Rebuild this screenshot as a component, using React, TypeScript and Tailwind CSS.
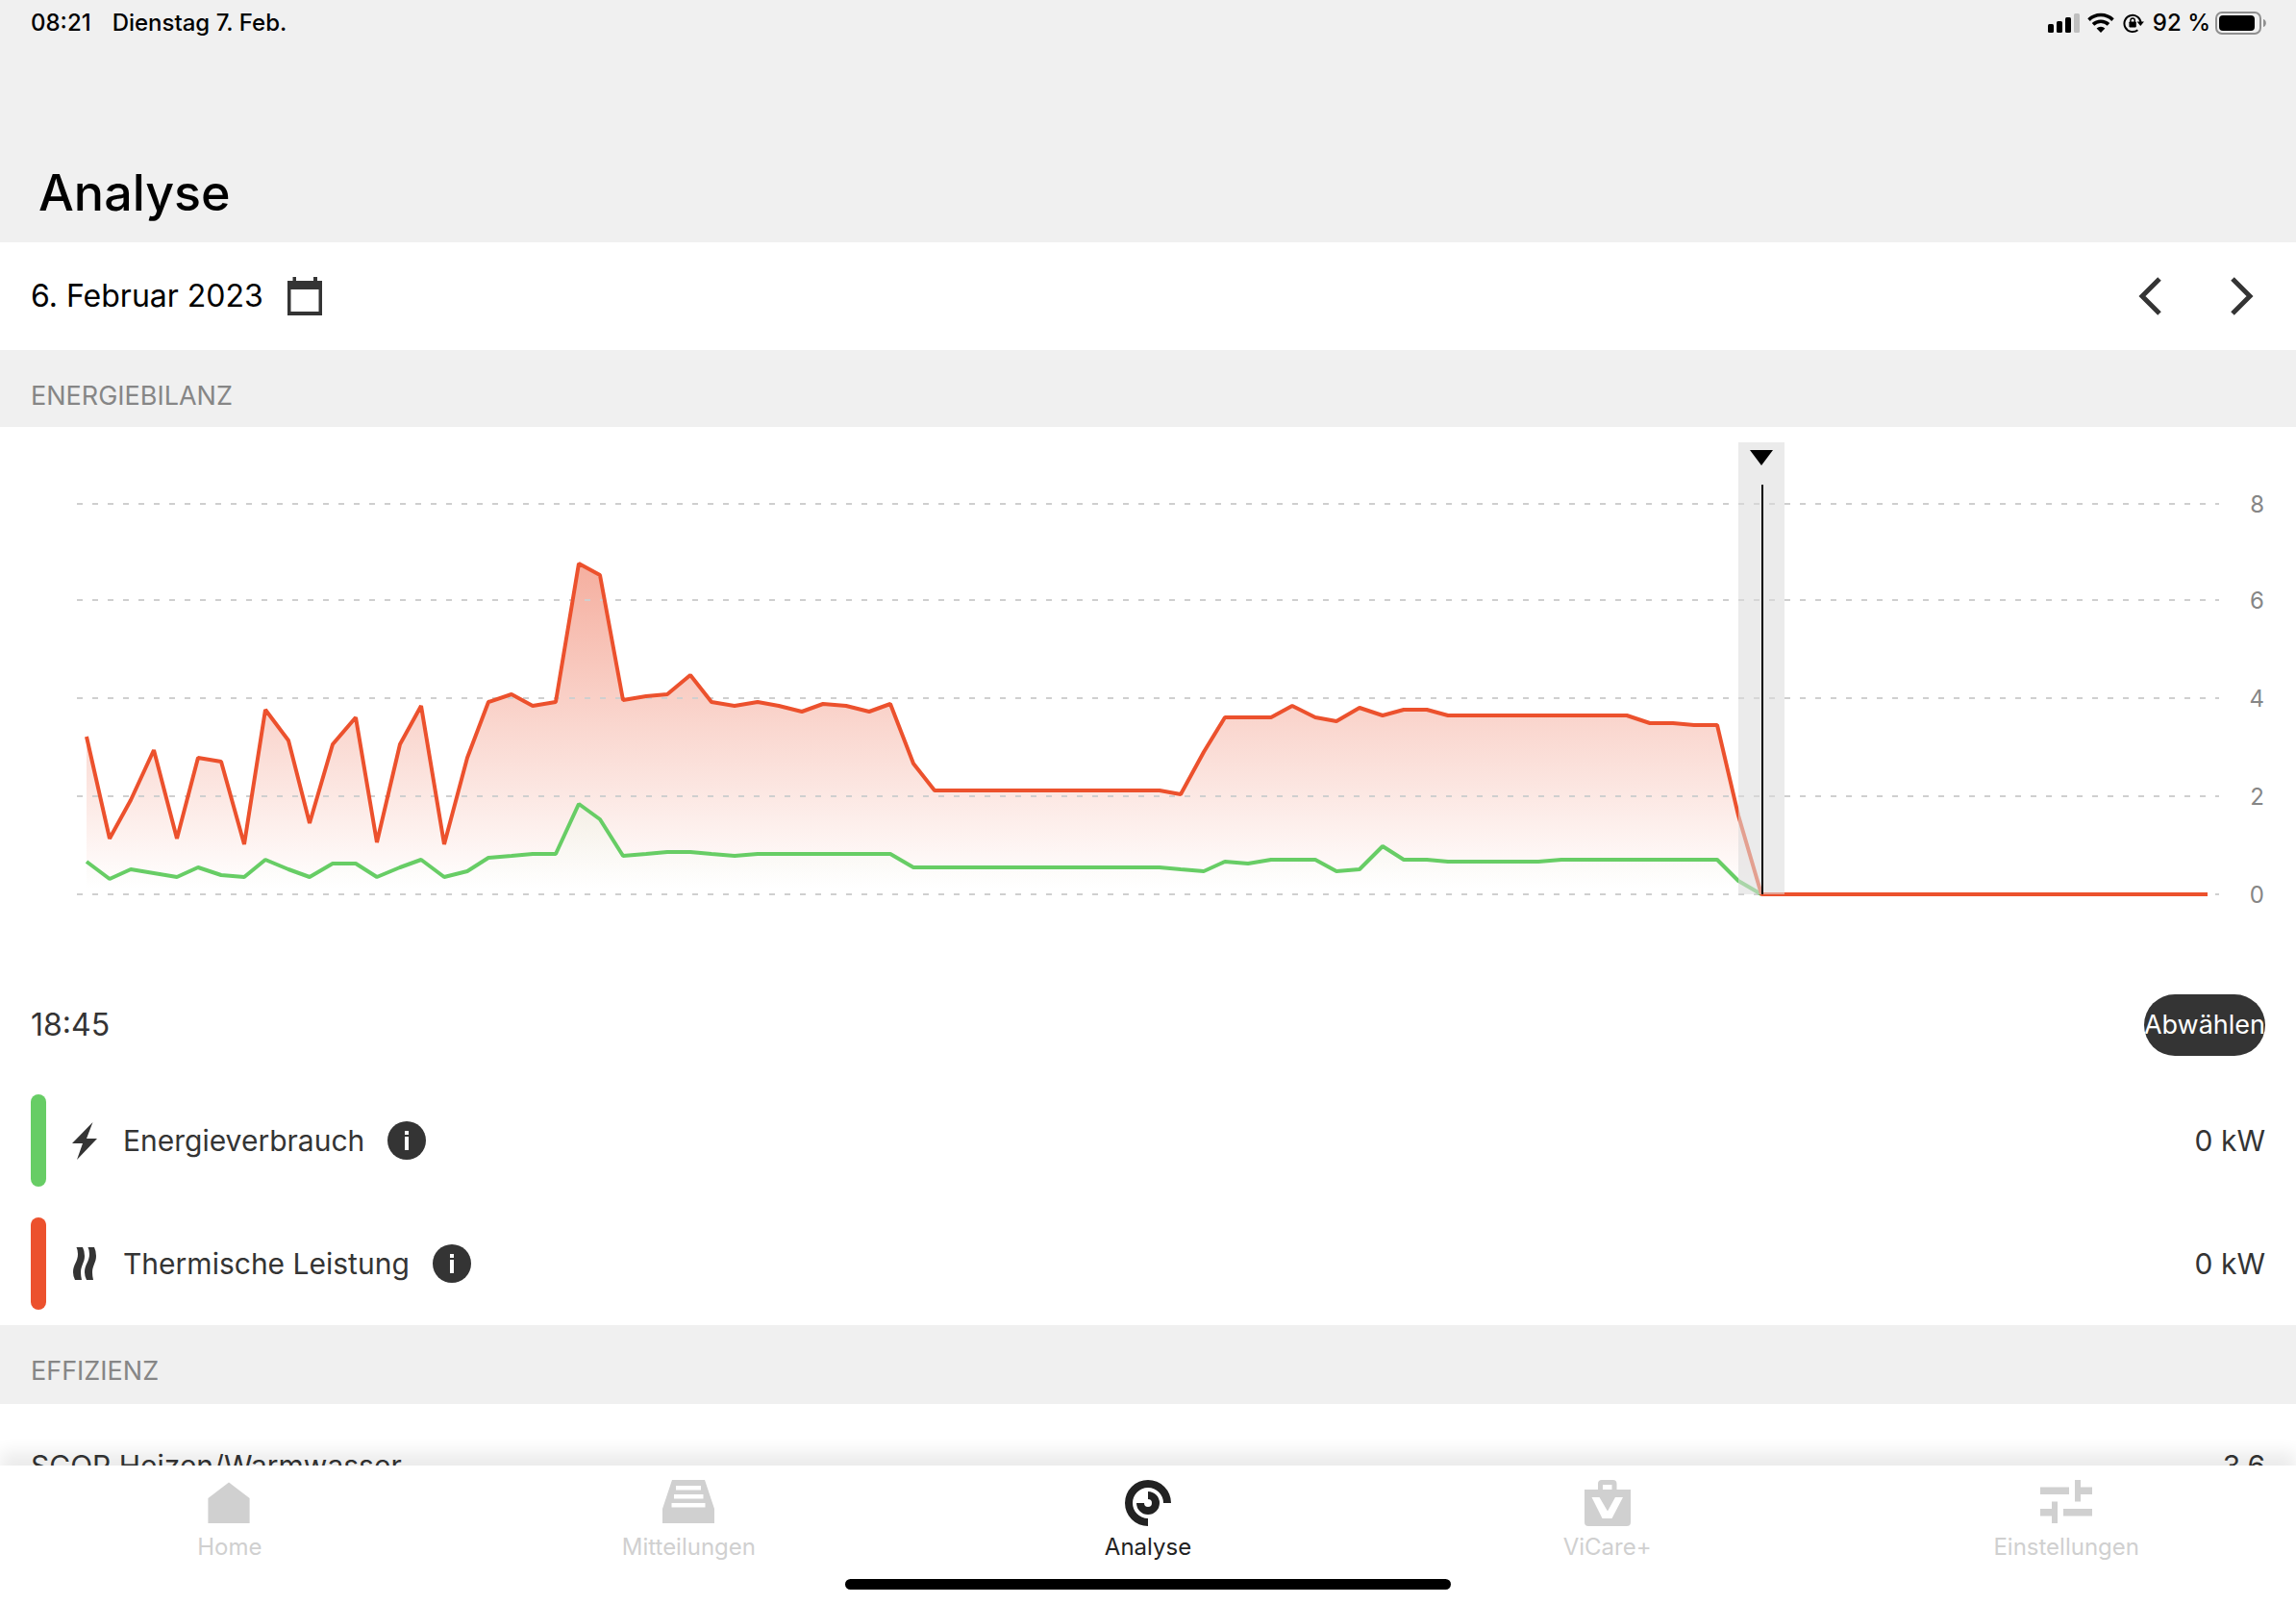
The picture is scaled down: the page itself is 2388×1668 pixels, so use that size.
import type { ReactNode } from "react";

// kW, one value per quarter of an hour, 00:00 to 23:45
const thermal = [
  3.23, 1.14, 1.93, 2.96, 1.14, 2.8, 2.72, 1.02, 3.78, 3.15, 1.46, 3.07, 3.63, 1.06, 3.07, 3.86,
  1.02, 2.8, 3.94, 4.1, 3.86, 3.94, 6.78, 6.54, 3.98, 4.06, 4.1, 4.49, 3.94, 3.86, 3.94, 3.86,
  3.74, 3.9, 3.86, 3.74, 3.9, 2.68, 2.13, 2.13, 2.13, 2.13, 2.13, 2.13, 2.13, 2.13, 2.13, 2.13,
  2.13, 2.05, 2.92, 3.63, 3.63, 3.63, 3.86, 3.63, 3.55, 3.82, 3.67, 3.78, 3.78, 3.67, 3.67, 3.67,
  3.67, 3.67, 3.67, 3.67, 3.67, 3.67, 3.51, 3.51, 3.47, 3.47, 1.62, 0, 0, 0, 0, 0,
  0, 0, 0, 0, 0, 0, 0, 0, 0, 0, 0, 0, 0, 0, 0, 0,
];

const consumption = [
  0.67, 0.32, 0.51, 0.43, 0.35, 0.55, 0.39, 0.35, 0.71, 0.51, 0.35, 0.63, 0.63, 0.35, 0.55, 0.71,
  0.35, 0.47, 0.75, 0.79, 0.83, 0.83, 1.85, 1.54, 0.79, 0.83, 0.87, 0.87, 0.83, 0.79, 0.83, 0.83,
  0.83, 0.83, 0.83, 0.83, 0.83, 0.55, 0.55, 0.55, 0.55, 0.55, 0.55, 0.55, 0.55, 0.55, 0.55, 0.55,
  0.55, 0.51, 0.47, 0.67, 0.63, 0.71, 0.71, 0.71, 0.47, 0.51, 0.99, 0.71, 0.71, 0.67, 0.67, 0.67,
  0.67, 0.67, 0.71, 0.71, 0.71, 0.71, 0.71, 0.71, 0.71, 0.71, 0.28, 0,
];

const CHART_LEFT = 90;
const CHART_RIGHT = 2296;
const BASELINE = 486;
const UNIT = 50.75;

// both axes snap to even units so that flat stretches stay crisp
const snap = (n: number) => Math.round(n / 2) * 2;
const xAt = (i: number) => snap(CHART_LEFT + 0.5 + (i * (CHART_RIGHT - CHART_LEFT)) / 95);
const yAt = (v: number) => snap(BASELINE - v * UNIT);

const linePath = (values: number[]) =>
  values.map((v, i) => `${i === 0 ? "M" : "L"}${xAt(i)} ${yAt(v)}`).join("");

const areaPath = (values: number[]) =>
  `${linePath(values)}L${xAt(values.length - 1)} ${BASELINE}L${CHART_LEFT} ${BASELINE}Z`;

const gridLines = [
  { label: "8", y: 80 },
  { label: "6", y: 180 },
  { label: "4", y: 282 },
  { label: "2", y: 384 },
  { label: "0", y: 486 },
];

function EnergyChart() {
  return (
    <svg viewBox="0 0 2388 590" className="block w-full" role="img" aria-label="Energiebilanz">
      <defs>
        <linearGradient id="thermal" gradientUnits="userSpaceOnUse" x1="0" y1="142" x2="0" y2="480">
          <stop offset="0" stopColor="#e9502e" stopOpacity="0.46" />
          <stop offset="1" stopColor="#e9502e" stopOpacity="0" />
        </linearGradient>
        <linearGradient id="consumption" gradientUnits="userSpaceOnUse" x1="0" y1="392" x2="0" y2="480">
          <stop offset="0" stopColor="#eff1e4" stopOpacity="0.6" />
          <stop offset="1" stopColor="#ffffff" stopOpacity="0.6" />
        </linearGradient>
      </defs>
      <path d={areaPath(thermal)} fill="url(#thermal)" />
      <path d={areaPath(consumption)} fill="url(#consumption)" />
      {gridLines.map(({ label, y }) => (
        <g key={label}>
          <line x1="80" x2="2308" y1={y} y2={y} stroke="#cfcfcf" strokeWidth="2" strokeDasharray="6 10" />
          <text x="2355" y={y + 9} textAnchor="end" className="fill-[#868686] text-[24px]">
            {label}
          </text>
        </g>
      ))}
      <path d={linePath(consumption)} fill="none" stroke="#67cd65" strokeWidth="4" strokeLinejoin="bevel" />
      <path d={linePath(thermal)} fill="none" stroke="#ec512d" strokeWidth="4" strokeLinejoin="bevel" />
      <rect x="1808" y="16" width="48" height="470" fill="#dcdcdc" fillOpacity="0.57" />
      <path d="M1820 24h24l-12 16z" fill="#000" />
      <rect x="1832" y="60" width="2" height="426" fill="#000" />
    </svg>
  );
}

function StatusBar() {
  return (
    <div className="flex h-12 items-center justify-between pr-[30px] pl-8 text-2xl font-medium text-black">
      <div className="flex gap-[22px]">
        <span>08:21</span>
        <span>Dienstag 7. Feb.</span>
      </div>
      <div className="flex items-center">
        <svg width="34" height="22" viewBox="0 0 34 22" aria-hidden="true">
          <rect x="0" y="12" width="6" height="9" rx="1.5" />
          <rect x="9" y="9" width="6" height="12" rx="1.5" />
          <rect x="18" y="5" width="6" height="16" rx="1.5" />
          <rect x="27" y="1" width="6" height="20" rx="1.5" fill="#bfbfbf" />
        </svg>
        <svg width="28" height="22" viewBox="0 0 28 22" className="ml-[7px]" aria-hidden="true">
          <g fill="none" stroke="#000" strokeWidth="3.6">
            <path d="M1.5 7.6a18 18 0 0 1 25 0" />
            <path d="M6 12.4a11.6 11.6 0 0 1 16 0" />
          </g>
          <path d="M9.6 16.4a6.4 6.4 0 0 1 8.8 0L14 21z" />
        </svg>
        <svg width="22" height="22" viewBox="0 0 22 22" className="ml-[9px]" aria-hidden="true">
          <path d="M15.4 18.2A8.6 8.6 0 1 1 18.6 10.5" fill="none" stroke="#000" strokeWidth="2" />
          <path d="M14.6 9.6h7.4l-3.7 4.4z" />
          <rect x="6.4" y="9.4" width="7.4" height="6" rx="0.8" />
          <path d="M7.9 10V8.2a2.2 2.2 0 0 1 4.4 0V10" fill="none" stroke="#000" strokeWidth="1.4" />
        </svg>
        <span className="ml-[9px]">92 %</span>
        <svg width="54" height="24" viewBox="0 0 54 24" className="ml-[5px]" aria-hidden="true">
          <rect x="1" y="1" width="46" height="22" rx="6" fill="none" stroke="#8f8f8f" strokeWidth="2" />
          <rect x="4" y="4" width="37" height="16" rx="4" />
          <path d="M50 8c3.800 1 3.800 7 0 8z" fill="#8f8f8f" />
        </svg>
      </div>
    </div>
  );
}

function SectionHeader({ children, className = "pb-4" }: { children: ReactNode; className?: string }) {
  return (
    <h2 className={`bg-[#f0f0f0] px-8 pt-8 text-[27px] leading-8 text-[#868686] uppercase ${className}`}>
      {children}
    </h2>
  );
}

function InfoButton({ label }: { label: string }) {
  return (
    <button type="button" aria-label={label} className="size-10">
      <svg viewBox="0 0 40 40" className="size-10">
        <circle cx="20" cy="20" r="20" fill="#343434" />
        <path d="M18 10h4v4h-4zM18 16h4v14h-4z" fill="#fff" />
      </svg>
    </button>
  );
}

interface ReadingProps {
  bar: string;
  icon: ReactNode;
  name: string;
  value: string;
}

function Reading({ bar, icon, name, value }: ReadingProps) {
  return (
    <div className="flex h-24 items-center text-[30px] text-[#343434]">
      <span className={`h-full w-4 rounded-full ${bar}`} />
      <span className="ml-5 flex w-10 justify-center">{icon}</span>
      <span className="mr-6 ml-5">{name}</span>
      <InfoButton label={`Info ${name}`} />
      <span className="ml-auto">{value}</span>
    </div>
  );
}

const tabs = [
  {
    name: "Home",
    icon: <path d="M26 2.500 43 19v26H9V19z" transform="translate(-7 0) scale(1.270 1)" />,
  },
  {
    name: "Mitteilungen",
    icon: (
      <path
        fillRule="evenodd"
        d="M10 0h34L54 30v15H0V30L10 0zM14 6v4.500h26V6zM12 15v4.500h30.500V15zM9.500 24v4.500h35V24z"
      />
    ),
  },
  {
    name: "Analyse",
    active: true,
    icon: (
      <path d="M27 48a24 24 0 1 1 24-24h-8a16 16 0 1 0-16 16zM27 12a12 12 0 1 1-12 12h8a4 4 0 1 0 4-4z" />
    ),
  },
  {
    name: "ViCare+",
    icon: (
      <path
        fillRule="evenodd"
        d="M3 10H17V4a4 4 0 0 1 4-4H32.500a4 4 0 0 1 4 4V10H51V44a4 4 0 0 1-4 4H7a4 4 0 0 1-4-4zM22 5v5h9.500V5zM10.500 18 21.500 40h10L43 18h-8L27 32.500 18.500 18z"
      />
    ),
  },
  {
    name: "Einstellungen",
    icon: <path d="M0 7.500h30V15H0zM36 0h6v7.500h12V15H42v7.500h-6zM0 30h12v-7.500h6V45h-6v-7.500H0zM24 30h30v7.500H24z" />,
  },
];

function TabBar() {
  return (
    <nav className="relative shrink-0 bg-white shadow-[0_-14px_16px_rgba(0,0,0,0.08)]">
      <div className="grid grid-cols-5 pt-[15px]">
        {tabs.map(({ name, icon, active }) => (
          <a
            key={name}
            href="#"
            className={`flex flex-col items-center gap-[6px] text-2xl leading-8 ${
              active ? "fill-[#222222] text-[#222222]" : "fill-[#d0d0d0] text-[#d0d0d0]"
            }`}
          >
            <svg width="54" height="48" viewBox="0 0 54 48" aria-hidden="true">
              {icon}
            </svg>
            {name}
          </a>
        ))}
      </div>
      <div className="mx-auto mt-[17px] mb-[15px] h-[11px] w-[630px] rounded-full bg-black" />
    </nav>
  );
}

export default function App() {
  return (
    <div className="flex h-screen flex-col overflow-hidden bg-white font-['Inter','Liberation_Sans',sans-serif] text-black">
      <header className="flex shrink-0 flex-col bg-[#f0f0f0]">
        <StatusBar />
        <h1 className="px-10 pt-[119px] pb-[17px] text-[52px] leading-[68px] font-medium">Analyse</h1>
      </header>

      <main className="min-h-0 flex-1 overflow-hidden">
        <div className="flex h-28 items-center pr-11 pl-8">
          <span className="text-[32px]">6. Februar 2023</span>
          <button type="button" aria-label="Datum wählen" className="ml-[25px]">
            <svg width="36" height="40" viewBox="0 0 36 40" className="block fill-[#343434]">
              <path fillRule="evenodd" d="M5.500 0H9v4h18V0h4v4h5v36H0V4h5.500zM3.500 13v23h29V13z" />
            </svg>
          </button>
          <div className="ml-auto flex gap-[72px]">
            <button type="button" aria-label="Vorheriger Tag">
              <svg width="24" height="40" viewBox="0 0 24 40" className="block" fill="none" stroke="#343434" strokeWidth="5">
                <path d="M22 2 4 20l18 18" />
              </svg>
            </button>
            <button type="button" aria-label="Nächster Tag">
              <svg width="24" height="40" viewBox="0 0 24 40" className="block" fill="none" stroke="#343434" strokeWidth="5">
                <path d="M2 2l18 18L2 38" />
              </svg>
            </button>
          </div>
        </div>

        <SectionHeader>Energiebilanz</SectionHeader>
        <EnergyChart />

        <div className="px-8 pb-4">
          <div className="flex h-16 items-center justify-between">
            <span className="text-[32px] text-[#343434]">18:45</span>
            <button
              type="button"
              className="flex h-16 w-[126px] items-center justify-center overflow-hidden rounded-full bg-[#343434] text-[27px] whitespace-nowrap text-white"
            >
              Abwählen
            </button>
          </div>
          <div className="mt-10 flex flex-col gap-8">
            <Reading
              bar="bg-[#67cd65]"
              name="Energieverbrauch"
              value="0 kW"
              icon={
                <svg width="26" height="39" viewBox="0 0 26 39" fill="#343434" aria-hidden="true">
                  <path d="M21.500 0 0 22h11L5 39 26 17H15z" />
                </svg>
              }
            />
            <Reading
              bar="bg-[#ec512d]"
              name="Thermische Leistung"
              value="0 kW"
              icon={
                <svg width="25" height="34" viewBox="0 0 25 34" fill="#343434" aria-hidden="true">
                  <path d="M3.500 0H10q2 4 2 9C12 16 8 19 8 26q0 4 1 8H2q-2-4-2-8C0 18 5 15 5 7q0-4-1.500-7z" />
                  <path d="M15.500 0H22q2 4 2 9c0 7-4 10-4 17q0 4 1 8h-7q-2-4-2-8c0-8 5-11 5-19q0-4-1.500-7z" />
                </svg>
              }
            />
          </div>
        </div>

        <SectionHeader className="pb-[18px]">Effizienz</SectionHeader>
        <div className="flex items-center justify-between px-8 pt-10 text-[30px] leading-[48px] text-[#343434]">
          <span>SCOP Heizen/Warmwasser</span>
          <span>3,6</span>
        </div>
      </main>

      <TabBar />
    </div>
  );
}
